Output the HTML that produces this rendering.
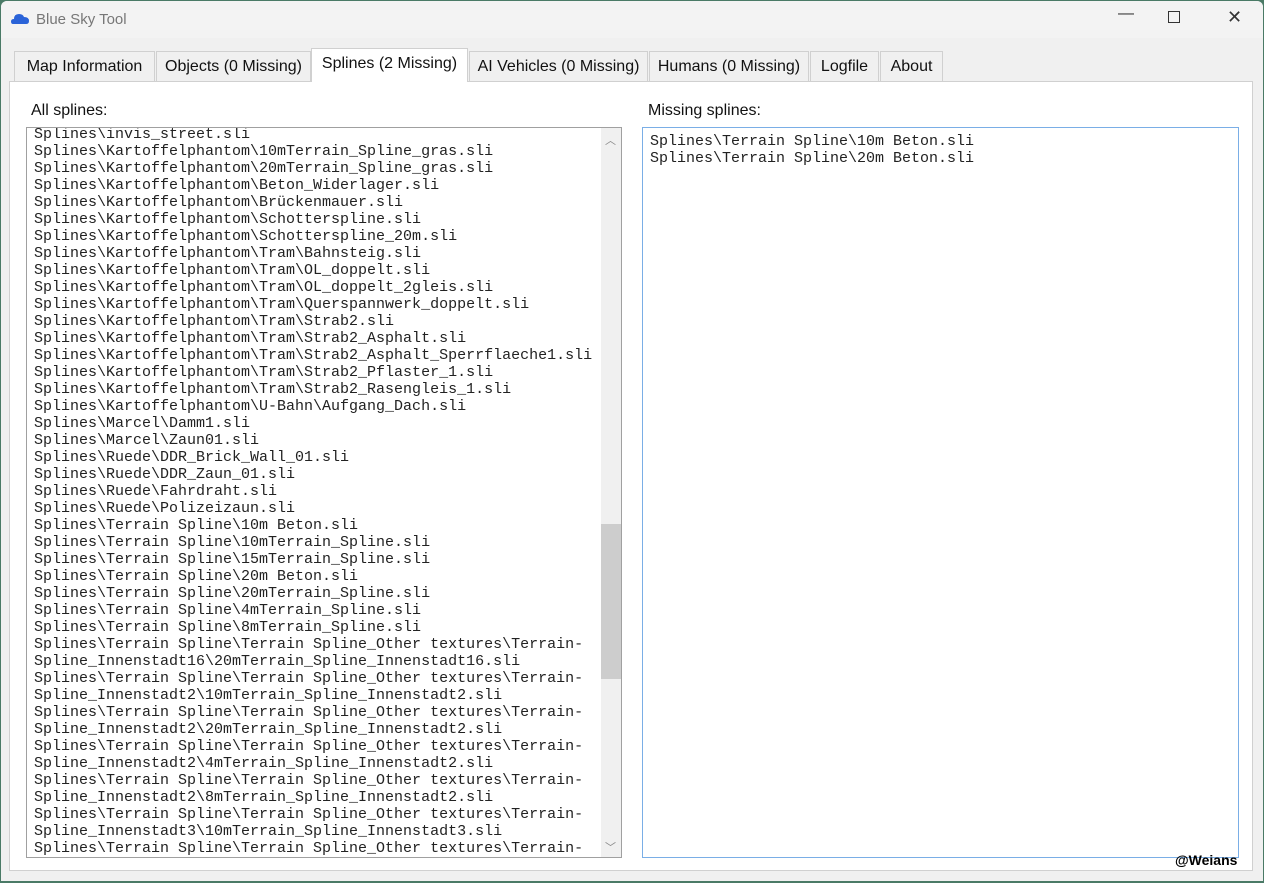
<!DOCTYPE html>
<html><head><meta charset="utf-8"><style>
*{box-sizing:border-box;margin:0;padding:0}
body{width:1264px;height:883px;overflow:hidden;background:#4a7a66;font-family:"Liberation Sans",sans-serif}
.win{position:absolute;left:1px;top:1px;width:1262px;height:880px;background:#f0f0f0;border-radius:6px 6px 0 0;overflow:hidden}
.title{height:37px;background:#f3f3f3;position:relative}
.title span{position:absolute;left:35px;top:10px;font-size:15px;color:#777}
.ctl{position:absolute;top:8px;color:#333;font-size:16px}
.tab{position:absolute;top:50px;height:30px;background:#f0f0f0;border:1px solid #d0d0d0;border-bottom:none;font-size:16px;color:#111;text-align:center;line-height:29px}
.tab.act{top:47px;height:34px;background:#fff;z-index:2}
.panel{position:absolute;left:8px;top:80px;width:1244px;height:790px;background:#fff;border:1px solid #d0d0d0}
.lbl{position:absolute;font-size:16px;color:#111}
.box{position:absolute;top:126px;height:731px;background:#fff;overflow:hidden}
.mono{font-family:"Liberation Mono",monospace;font-size:15px;line-height:17px;white-space:pre;color:#222}
</style></head><body>
<div class="win">
<div class="title">
<svg style="position:absolute;left:10px;top:12px" width="18" height="12" viewBox="0 0 18 12"><path d="M2 11 Q0 11 0 8.5 Q0 6 3 6 Q3 1 8 1 Q12 1 13 4 Q18 4 18 8 Q18 11 15 11Z" fill="#2a63d8"/></svg>
<span>Blue Sky Tool</span>
<div class="ctl" style="left:1117px;top:4px">—</div>
<div class="ctl" style="left:1167px;top:10px;width:12px;height:12px;border:1px solid #333"></div>
<div class="ctl" style="left:1226px;top:6px;font-size:18px">✕</div>
</div>
<div class="panel"></div>
<div class="tab" style="left:13px;width:141px">Map Information</div>
<div class="tab" style="left:155px;width:155px">Objects (0 Missing)</div>
<div class="tab act" style="left:310px;width:157px">Splines (2 Missing)</div>
<div class="tab" style="left:468px;width:179px">AI Vehicles (0 Missing)</div>
<div class="tab" style="left:648px;width:160px">Humans (0 Missing)</div>
<div class="tab" style="left:809px;width:69px">Logfile</div>
<div class="tab" style="left:879px;width:63px">About</div>
<div class="lbl" style="left:30px;top:101px">All splines:</div>
<div class="lbl" style="left:647px;top:101px">Missing splines:</div>
<div class="box" style="left:25px;width:596px;border:1px solid #a0a0a0">
<div class="mono" style="position:absolute;left:7px;top:-2px">Splines\invis_street.sli
Splines\Kartoffelphantom\10mTerrain_Spline_gras.sli
Splines\Kartoffelphantom\20mTerrain_Spline_gras.sli
Splines\Kartoffelphantom\Beton_Widerlager.sli
Splines\Kartoffelphantom\Brückenmauer.sli
Splines\Kartoffelphantom\Schotterspline.sli
Splines\Kartoffelphantom\Schotterspline_20m.sli
Splines\Kartoffelphantom\Tram\Bahnsteig.sli
Splines\Kartoffelphantom\Tram\OL_doppelt.sli
Splines\Kartoffelphantom\Tram\OL_doppelt_2gleis.sli
Splines\Kartoffelphantom\Tram\Querspannwerk_doppelt.sli
Splines\Kartoffelphantom\Tram\Strab2.sli
Splines\Kartoffelphantom\Tram\Strab2_Asphalt.sli
Splines\Kartoffelphantom\Tram\Strab2_Asphalt_Sperrflaeche1.sli
Splines\Kartoffelphantom\Tram\Strab2_Pflaster_1.sli
Splines\Kartoffelphantom\Tram\Strab2_Rasengleis_1.sli
Splines\Kartoffelphantom\U-Bahn\Aufgang_Dach.sli
Splines\Marcel\Damm1.sli
Splines\Marcel\Zaun01.sli
Splines\Ruede\DDR_Brick_Wall_01.sli
Splines\Ruede\DDR_Zaun_01.sli
Splines\Ruede\Fahrdraht.sli
Splines\Ruede\Polizeizaun.sli
Splines\Terrain Spline\10m Beton.sli
Splines\Terrain Spline\10mTerrain_Spline.sli
Splines\Terrain Spline\15mTerrain_Spline.sli
Splines\Terrain Spline\20m Beton.sli
Splines\Terrain Spline\20mTerrain_Spline.sli
Splines\Terrain Spline\4mTerrain_Spline.sli
Splines\Terrain Spline\8mTerrain_Spline.sli
Splines\Terrain Spline\Terrain Spline_Other textures\Terrain-
Spline_Innenstadt16\20mTerrain_Spline_Innenstadt16.sli
Splines\Terrain Spline\Terrain Spline_Other textures\Terrain-
Spline_Innenstadt2\10mTerrain_Spline_Innenstadt2.sli
Splines\Terrain Spline\Terrain Spline_Other textures\Terrain-
Spline_Innenstadt2\20mTerrain_Spline_Innenstadt2.sli
Splines\Terrain Spline\Terrain Spline_Other textures\Terrain-
Spline_Innenstadt2\4mTerrain_Spline_Innenstadt2.sli
Splines\Terrain Spline\Terrain Spline_Other textures\Terrain-
Spline_Innenstadt2\8mTerrain_Spline_Innenstadt2.sli
Splines\Terrain Spline\Terrain Spline_Other textures\Terrain-
Spline_Innenstadt3\10mTerrain_Spline_Innenstadt3.sli
Splines\Terrain Spline\Terrain Spline_Other textures\Terrain-</div>
<div style="position:absolute;right:0;top:0;width:20px;height:729px;background:#f0f0f0"></div>
<div style="position:absolute;right:0;top:396px;width:20px;height:155px;background:#cdcdcd"></div>
<div style="position:absolute;right:5px;top:4px;color:#888;font-size:11px">︿</div>
<div style="position:absolute;right:5px;bottom:2px;color:#888;font-size:11px">﹀</div>
</div>
<div class="box" style="left:641px;width:597px;border:1px solid #7aaee6">
<div class="mono" style="position:absolute;left:7px;top:5px">Splines\Terrain Spline\10m Beton.sli
Splines\Terrain Spline\20m Beton.sli</div>
</div>
<div style="position:absolute;left:1174px;top:851px;font:bold 14px 'Liberation Sans',sans-serif;color:#000">@Weians</div>
</div>
</body></html>
